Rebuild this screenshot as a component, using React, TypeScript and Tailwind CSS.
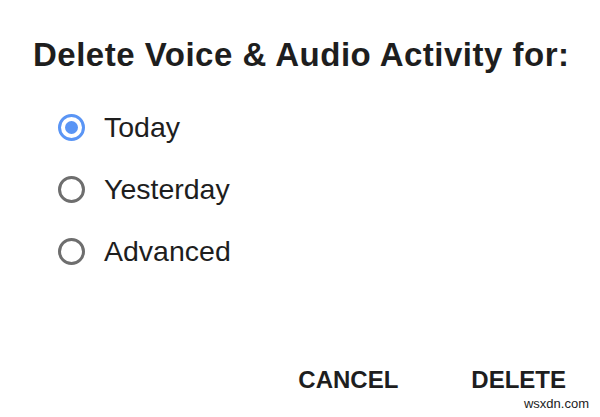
import { useState } from "react"

const options = ["Today", "Yesterday", "Advanced"]

function Radio({ checked }: { checked: boolean }) {
  return checked ? (
    <span className="flex h-[27px] w-[27px] items-center justify-center rounded-full border-[3px] border-[#5a95f5]">
      <span className="h-[13px] w-[13px] rounded-full bg-[#5a95f5]" />
    </span>
  ) : (
    <span className="h-[27px] w-[27px] rounded-full border-[3px] border-[#6e6e6e]" />
  )
}

export default function App() {
  const [selected, setSelected] = useState("Today")

  return (
    <div className="relative h-[417px] w-[600px] bg-white font-['Liberation_Sans',Arial,sans-serif] text-[#1e1e1e]">
      <h1 className="pl-[33px] pt-[35px] text-[33px] font-bold leading-[40px] tracking-[0.5px]">
        Delete Voice &amp; Audio Activity for:
      </h1>

      <div className="mt-[39px] flex flex-col gap-[35px] pl-[58px]">
        {options.map((opt) => (
          <button
            key={opt}
            onClick={() => setSelected(opt)}
            className="flex h-[27px] items-center gap-[19px] text-left"
          >
            <Radio checked={selected === opt} />
            <span className="text-[28.5px] leading-none">{opt}</span>
          </button>
        ))}
      </div>

      <div className="absolute bottom-[23px] right-[34px] flex gap-[73px] text-[24px] font-bold leading-[28px]">
        <button>CANCEL</button>
        <button>DELETE</button>
      </div>

      <span className="absolute bottom-[4px] right-[11px] text-[13px] text-[#222]">wsxdn.com</span>
    </div>
  )
}
